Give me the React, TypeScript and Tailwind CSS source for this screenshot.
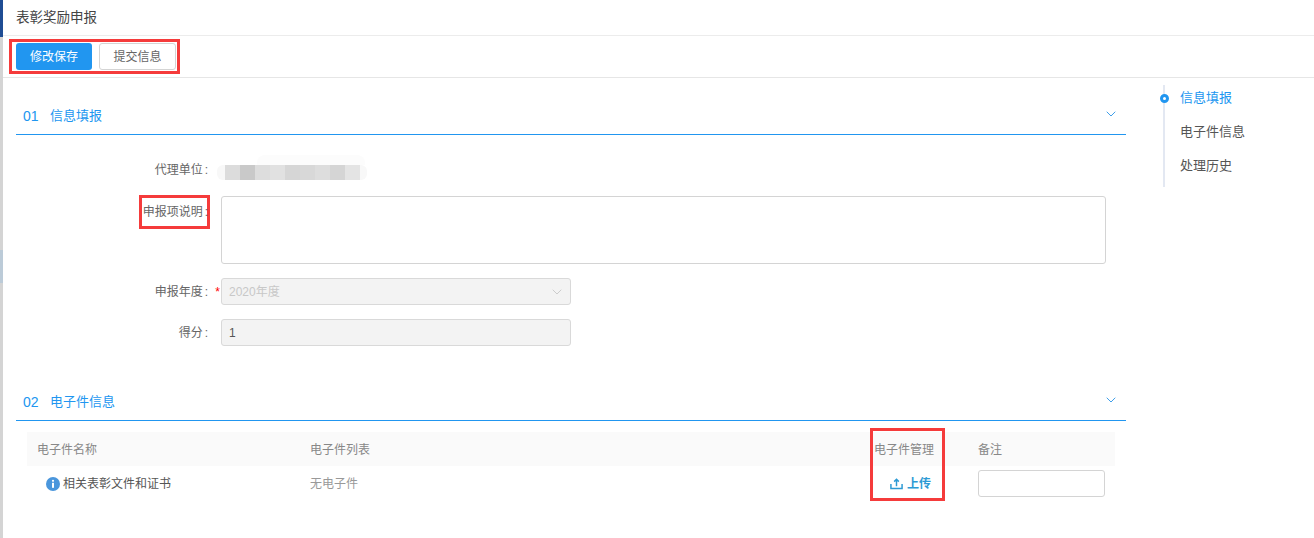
import React from "react";
import { ChevronDown } from "lucide-react";

const font = { fontFamily: '"Liberation Sans", "Noto Sans CJK SC", sans-serif' };

function SectionHead({ no, title }: { no: string; title: string }) {
  return (
    <div className="flex h-[42px] items-start border-b border-[#2196f0] pl-[7px] pr-[7px] pt-[15px]">
      <span className="w-[27px] text-[14px] leading-[16px] text-[#2196f0]">{no}</span>
      <span className="flex-1 text-[13px] leading-[16px] text-[#2196f0]">{title}</span>
      <ChevronDown className="-mt-[2px] h-[16px] w-[16px] text-[#3f9fea]" strokeWidth={1.5} />
    </div>
  );
}

function Label({ children, star }: { children: React.ReactNode; star?: boolean }) {
  return (
    <div className="relative w-[205px] shrink-0 pr-[13px] text-right text-[12px] leading-[16px] text-[#666]">
      {children}
      <span className="ml-[2px]">:</span>
      {star && <span className="absolute right-[1px] top-0 text-[#f00]">*</span>}
    </div>
  );
}

const blurCells = [
  "bg-[#dcdcdc]",
  "bg-[#c9c9c9]",
  "bg-[#dddddd]",
  "bg-[#e1e1e1]",
  "bg-[#d6d6d6]",
  "bg-[#d8d8d8]",
  "bg-[#dddddd]",
  "bg-[#d5d5d5]",
  "bg-[#e4e4e4]",
];

export default function App() {
  return (
    <div style={font} className="relative flex h-[538px] w-[1314px] overflow-hidden bg-white">
      {/* left edge of the window behind */}
      <div className="flex h-full w-[3px] shrink-0 flex-col bg-[#d4d4d4]">
        <div className="h-[37px] bg-[#1f4d94]" />
        <div className="mt-[213px] h-[33px] bg-[#bccbd8]" />
      </div>

      <div className="min-w-0 flex-1">
        <div className="flex h-[36px] items-center border-b border-[#ececec] pl-[13px] pt-[1px] text-[13.5px] text-[#444]">
          表彰奖励申报
        </div>

        <div className="h-[42px] border-b border-[#e6e6e6] pl-[6px] pt-[3px]">
          <div className="flex h-[35px] w-[171px] items-center gap-[7px] border-[3px] border-[#f53b3b] pl-[4px]">
            <button className="h-[27px] w-[76px] rounded-[3px] bg-[#2196f0] text-[12px] text-white">修改保存</button>
            <button className="h-[27px] w-[77px] rounded-[3px] border border-[#d4d4d4] bg-white text-[12px] text-[#666]">提交信息</button>
          </div>
        </div>

        <div className="flex">
          <div className="w-[1123px] shrink-0 pl-[13px]">
            <div className="pt-[15px]">
              <SectionHead no="01" title="信息填报" />
            </div>

            <div className="flex h-[61px] items-start pt-[27px]">
              <Label>代理单位</Label>
              <div className="relative -ml-[4px] mt-[3px] flex h-[15px] w-[150px] rounded-[6px] bg-[#f8f8f8] pl-[8px]">
                <div className="absolute left-[40px] top-[-10px] h-[10px] w-[108px] rounded-t-[8px] bg-[#fcfcfc]" />
                {blurCells.map((c, i) => (
                  <span key={i} className={`h-full w-[15px] ${c}`} />
                ))}
              </div>
            </div>

            <div className="flex items-start">
              <div className="relative w-[205px] shrink-0">
                <div className="absolute left-[123px] top-[-1px] h-[34px] w-[71px] border-[3px] border-[#f53b3b]" />
                <div className="pt-[8px]">
                  <Label>申报项说明</Label>
                </div>
              </div>
              <textarea className="h-[68px] w-[885px] resize-none rounded-[3px] border border-[#d4d4d4] bg-white" />
            </div>

            <div className="mt-[14px] flex items-center">
              <Label star>申报年度</Label>
              <div className="flex h-[27px] w-[350px] items-center justify-between rounded-[3px] border border-[#d9d9d9] bg-[#f3f3f3] pl-[7px] pr-[5px] text-[12px] text-[#c8c8c8]">
                2020年度
                <ChevronDown className="h-[16px] w-[16px] text-[#ccc]" strokeWidth={1.5} />
              </div>
            </div>

            <div className="mt-[14px] flex items-center">
              <Label>得分</Label>
              <div className="flex h-[27px] w-[350px] items-center rounded-[3px] border border-[#d9d9d9] bg-[#f3f3f3] pl-[7px] text-[12px] text-[#555]">
                1
              </div>
            </div>

            <div className="pt-[33px]">
              <SectionHead no="02" title="电子件信息" />
            </div>

            <div className="ml-[11px] mt-[11px] w-[1088px]">
              <div className="flex h-[34px] items-center bg-[#fafafa] pt-[2px] text-[12px] text-[#888]">
                <span className="w-[283px] pl-[10px]">电子件名称</span>
                <span className="w-[564px]">电子件列表</span>
                <span className="w-[104px]">电子件管理</span>
                <span>备注</span>
              </div>
              <div className="flex h-[35px] items-center text-[12px]">
                <span className="flex w-[283px] items-center gap-[3px] pl-[19px] text-[#555]">
                  <svg viewBox="0 0 14 14" className="h-[14px] w-[14px]">
                    <circle cx="7" cy="7" r="7" fill="#4a96dc" />
                    <circle cx="7" cy="3.8" r="1.1" fill="#fff" />
                    <rect x="6" y="5.8" width="2" height="5" fill="#fff" />
                  </svg>
                  相关表彰文件和证书
                </span>
                <span className="w-[579px] text-[#999]">无电子件</span>
                <span className="flex w-[89px] items-center gap-[4px] pl-[1px] font-bold text-[#2d9ad4]">
                  <svg viewBox="0 0 14 14" className="h-[13px] w-[13px]" fill="none" stroke="#2d9ad4" strokeWidth="1.6">
                    <path d="M1 7.5V12.5H13V7.5" />
                    <path d="M7 10V2.5M4.5 5L7 2.5L9.5 5" />
                  </svg>
                  上传
                </span>
                <input className="h-[27px] w-[127px] rounded-[3px] border border-[#d4d4d4] bg-white" />
              </div>
            </div>
          </div>

          {/* anchor nav */}
          <div className="ml-[37px] mt-[7px] h-[102px] border-l-2 border-[#e3e8f2] pl-[15px]">
            <div className="relative -mt-[4px] flex h-[34px] items-center text-[13px] text-[#2196f0]">
              <span className="absolute left-[-20px] top-[13px] h-[9px] w-[9px] rounded-full border-[3px] border-[#2196f0] bg-white" />
              信息填报
            </div>
            <div className="flex h-[34px] items-center text-[13px] text-[#555]">电子件信息</div>
            <div className="flex h-[34px] items-center text-[13px] text-[#555]">处理历史</div>
          </div>
        </div>

        {/* red mark round the upload column */}
        <div className="pointer-events-none absolute left-[870px] top-[428px] h-[73px] w-[75px] border-[3px] border-[#f53b3b]" />
      </div>
    </div>
  );
}
